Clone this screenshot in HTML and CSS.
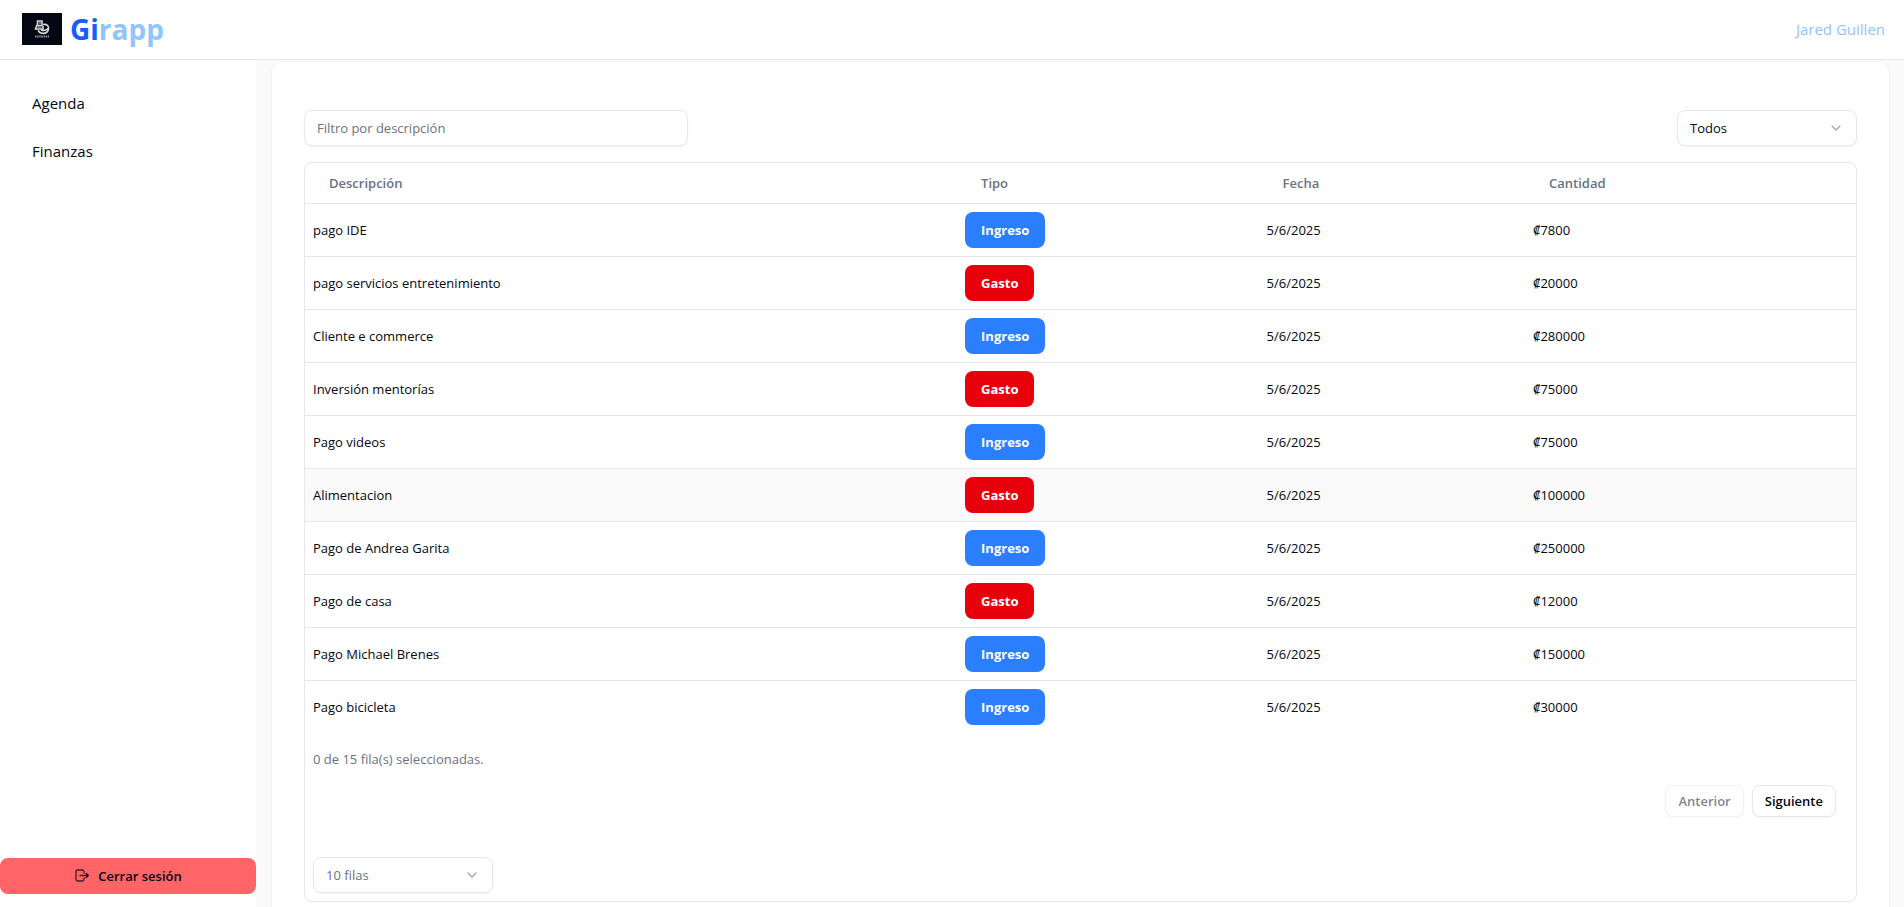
FILE: index.html
```html
<!DOCTYPE html>
<html lang="es">
<head>
<meta charset="utf-8">
<meta name="viewport" content="width=device-width, initial-scale=1">
<title>Girapp</title>
<link rel="stylesheet" href="styles.css">
</head>
<body>
<div class="app">
  <header class="topbar">
    <a class="brand" href="#">
      <svg class="brand-logo" viewBox="0 0 40 32" aria-hidden="true">
        <rect width="40" height="32" fill="#030712"/>
        <g fill="none" stroke="#d4d6da" stroke-width="1.600">
          <path d="M15.500 8h4.500v4.500h-4.500zM15 12l-1.500 4h7.500v-3"/>
          <path d="M21 11.500c4-.8 6 1.500 5.500 4.500-.5 3-3 4.500-6 4.300-2-.2-3.800-1.300-4.300-3M19 16.500c2 1.500 4.500 1.300 7-1"/>
        </g>
        <path d="M16.500 10h2.500M15.500 14h4" stroke="#8b8e95" stroke-width="1.500"/>
        <path d="M13 23.500h14" stroke="#8b8e95" stroke-width="2" stroke-dasharray="1.500 .6"/>
      </svg>
      <span class="brand-name"><span class="brand-strong">Gi</span>rapp</span>
    </a>
    <span class="user">Jared Guillen</span>
  </header>
  <div class="body">
    <aside class="sidebar">
      <nav class="nav">
        <a href="#">Agenda</a>
        <a href="#">Finanzas</a>
      </nav>
      <button class="logout" type="button">
        <svg viewBox="0 0 16 16" width="16" height="16" fill="none" stroke="currentColor" stroke-width="1.300" stroke-linecap="round" stroke-linejoin="round" aria-hidden="true"><g opacity=".75"><path d="M10 5V3.500A1.500 1.500 0 0 0 8.500 2H3.500A1.500 1.500 0 0 0 2 3.500v8A1.500 1.500 0 0 0 3.500 13h5a1.500 1.500 0 0 0 1.500-1.500V10"/><path d="M6 7.500h8"/></g><path d="m12.200 5.500 2 2-2 2"/></svg>
        Cerrar sesión
      </button>
    </aside>
    <main class="main">
      <section class="card">
        <div class="filters">
          <input class="control filter-input" type="text" placeholder="Filtro por descripción" aria-label="Filtro por descripción">
          <select class="control select" aria-label="Tipo"><option>Todos</option><option>Ingreso</option><option>Gasto</option></select>
        </div>
        <div class="panel">
          <table class="table">
            <colgroup><col class="col-desc"><col class="col-type"><col class="col-date"><col class="col-amount"></colgroup>
            <thead><tr><th>Descripción</th><th>Tipo</th><th>Fecha</th><th>Cantidad</th></tr></thead>
            <tbody>
              <tr><td>pago IDE</td><td><span class="badge income">Ingreso</span></td><td>5/6/2025</td><td>₡7800</td></tr>
              <tr><td>pago servicios entretenimiento</td><td><span class="badge expense">Gasto</span></td><td>5/6/2025</td><td>₡20000</td></tr>
              <tr><td>Cliente e commerce</td><td><span class="badge income">Ingreso</span></td><td>5/6/2025</td><td>₡280000</td></tr>
              <tr><td>Inversión mentorías</td><td><span class="badge expense">Gasto</span></td><td>5/6/2025</td><td>₡75000</td></tr>
              <tr><td>Pago videos</td><td><span class="badge income">Ingreso</span></td><td>5/6/2025</td><td>₡75000</td></tr>
              <tr class="active"><td>Alimentacion</td><td><span class="badge expense">Gasto</span></td><td>5/6/2025</td><td>₡100000</td></tr>
              <tr><td>Pago de Andrea Garita</td><td><span class="badge income">Ingreso</span></td><td>5/6/2025</td><td>₡250000</td></tr>
              <tr><td>Pago de casa</td><td><span class="badge expense">Gasto</span></td><td>5/6/2025</td><td>₡12000</td></tr>
              <tr><td>Pago Michael Brenes</td><td><span class="badge income">Ingreso</span></td><td>5/6/2025</td><td>₡150000</td></tr>
              <tr><td>Pago bicicleta</td><td><span class="badge income">Ingreso</span></td><td>5/6/2025</td><td>₡30000</td></tr>
            </tbody>
          </table>
          <div class="footer">
            <p class="selection">0 de 15 fila(s) seleccionadas.</p>
            <div class="pager">
              <button class="page-btn" type="button" disabled>Anterior</button>
              <button class="page-btn" type="button">Siguiente</button>
            </div>
            <select class="control select muted" aria-label="Filas por página"><option>10 filas</option><option>20 filas</option></select>
          </div>
        </div>
      </section>
    </main>
  </div>
</div>
</body>
</html>
```
FILE: styles.css
```css
* { box-sizing: border-box; }

body {
  margin: 0;
  background: #fafafa;
  color: #030712;
  font: 13px/20px "Open Sans", "Noto Sans", sans-serif;
}

button, input, select { font: inherit; color: inherit; }
a { color: inherit; text-decoration: none; }

.app { display: flex; flex-direction: column; height: 100vh; overflow: hidden; }

.topbar {
  display: flex;
  flex: none;
  align-items: center;
  justify-content: space-between;
  height: 60px;
  padding: 0 19px 1px 22px;
  background: #fff;
  border-bottom: 1px solid #e5e7eb;
}
.brand { display: flex; align-items: center; gap: 8px; }
.brand-logo { width: 40px; height: 32px; }
.brand-name { color: #90c5ff; font-size: 28px; font-weight: 700; line-height: 36px; }
.brand-strong { color: #155dfc; }
.user { color: #90c5ff; font-size: 15px; }

.body { display: flex; flex: 1; min-height: 0; }

.sidebar {
  display: flex;
  flex: none;
  flex-direction: column;
  justify-content: space-between;
  width: 256px;
  padding: 19px 0 13px;
  background: #fff;
}
.nav { display: flex; flex-direction: column; padding: 0 16px; font-size: 15px; line-height: 24px; }
.nav a { padding: 12px 16px; }
.logout {
  display: flex;
  align-items: center;
  justify-content: center;
  gap: 8px;
  height: 36px;
  border: 0;
  border-radius: 8px;
  background: #ff6467;
  font-weight: 600;
}

.main { flex: 1; min-width: 0; padding: 1px 14px 0 15px; }
.card {
  padding: 48px 32px;
  background: #fff;
  border: 1px solid #f3f4f6;
  border-radius: 12px;
  box-shadow: 0 1px 2px rgb(0 0 0 / 4%);
}

.filters { display: flex; justify-content: space-between; margin-bottom: 16px; }
.control {
  height: 36px;
  padding: 0 12px;
  background: #fff;
  border: 1px solid #e5e7eb;
  border-radius: 8px;
  box-shadow: 0 1px 2px rgb(0 0 0 / 5%);
}
.filter-input { width: 384px; }
.filter-input::placeholder { color: #6a7282; opacity: 1; }
.select {
  width: 180px;
  appearance: none;
  background: #fff url("data:image/svg+xml,%3Csvg xmlns='http://www.w3.org/2000/svg' width='16' height='16' viewBox='0 0 24 24' fill='none' stroke='%23a1a5ae' stroke-width='2' stroke-linecap='round' stroke-linejoin='round'%3E%3Cpath d='m6 9 6 6 6-6'/%3E%3C/svg%3E") no-repeat right 12px center;
}
.muted { color: #6a7282; }

.panel { border: 1px solid #e5e7eb; border-radius: 8px; overflow: hidden; }

.table { width: 100%; border-collapse: separate; border-spacing: 0; table-layout: fixed; }
.col-desc { width: 42.04%; }
.col-type { width: 19.44%; }
.col-date { width: 17.18%; }
.col-amount { width: 21.34%; }
th, td { border-bottom: 1px solid #e5e7eb; text-align: left; white-space: nowrap; }
th { height: 41px; padding: 0 24px; color: #6a7282; font-weight: 600; }
td { height: 53px; padding: 0 8px; }
tr:last-child td { height: 52px; border-bottom: 0; }
thead tr:last-child th { border-bottom: 1px solid #e5e7eb; }
.active td { background: #fafafa; }

.badge {
  display: inline-block;
  padding: 8px 16px;
  border-radius: 8px;
  color: #fff;
  font-weight: 700;
  vertical-align: middle;
}
.income { background: #2b7fff; }
.expense { background: #e7000b; }

.footer { display: flex; flex-direction: column; padding: 16px 8px 8px; }
.selection { margin: 0 0 16px; color: #6a7282; }
.pager { display: flex; justify-content: flex-end; gap: 8px; margin-bottom: 40px; padding-right: 12px; }
.page-btn {
  height: 32px;
  padding: 0 12px;
  background: #fff;
  border: 1px solid #e5e7eb;
  border-radius: 8px;
  box-shadow: 0 1px 2px rgb(0 0 0 / 5%);
  font-weight: 600;
}
.page-btn:disabled { opacity: .5; }
```
